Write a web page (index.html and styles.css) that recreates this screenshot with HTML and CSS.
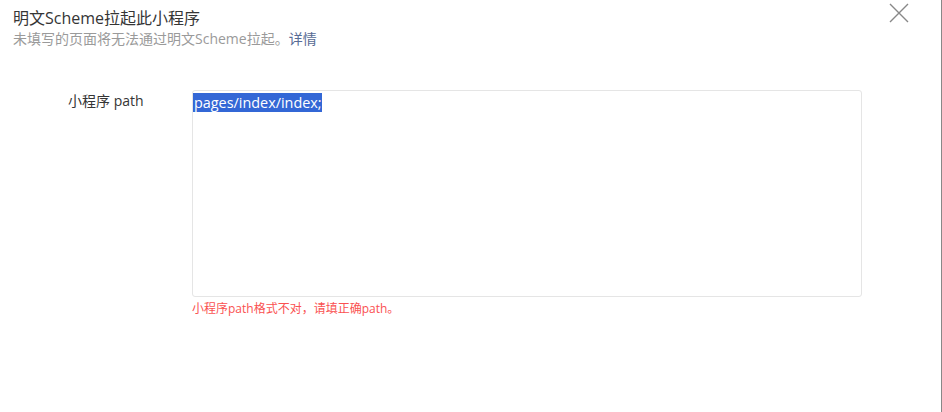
FILE: index.html
```html
<!DOCTYPE html>
<html>

<head>
    <meta charset="UTF-8" />
    <meta name="viewport" content="width=device-width, initial-scale=1.0" />
    <title>明文Scheme拉起此小程序</title>
    <link rel="stylesheet" href="styles.css">
</head>

<body>
    <div class="dialog">
        <div class="head">
            <div class="title">明文Scheme拉起此小程序</div>
            <div class="desc">未填写的页面将无法通过明文Scheme拉起。<a class="link" href="#">详情</a></div>
            <span class="close">
                <svg width="20" height="20" viewBox="0 0 20 20">
                    <path d="M1 1L19 19M19 1L1 19" stroke="#888" stroke-width="1.4" fill="none" />
                </svg>
            </span>
        </div>

        <div class="form">
            <div class="label">小程序 path</div>
            <div class="field">
                <div class="box"><span class="sel">pages/index/index;</span></div>
                <div class="error">小程序path格式不对，请填正确path。</div>
            </div>
        </div>
    </div>
</body>

</html>
```
FILE: styles.css
```css
body {
    margin: 0;
    background: #fff;
    font-family: "Open Sans", "Noto Sans CJK SC", sans-serif;
    color: #333;
}

.dialog {
    height: 412px;
    box-sizing: border-box;
    border-right: 1px solid #888;
}

.head {
    position: relative;
    padding: 7px 13px 0;
}

.title {
    font-size: 16px;
    line-height: 23px;
    color: #353535;
}

.desc {
    font-size: 14px;
    line-height: 18px;
    color: #9a9a9a;
}

.link {
    color: #576b95;
    text-decoration: none;
}

.close {
    position: absolute;
    top: 3px;
    right: 32px;
    width: 20px;
    height: 20px;
}

.form {
    display: flex;
    margin-top: 42px;
}

.label {
    flex-shrink: 0;
    width: 192px;
    padding-left: 68px;
    box-sizing: border-box;
    font-size: 14px;
    line-height: 20px;
    padding-top: 1px;
    color: #353535;
}

.field {
    width: 670px;
}

.box {
    height: 207px;
    box-sizing: border-box;
    border: 1px solid #e5e5e5;
    border-radius: 3px;
    padding: 1px 0 0 0;
    font-size: 14.4px;
    line-height: 21px;
}

.sel {
    background: #3367d6;
    color: #fff;
    padding: 0 0 0 1px;
}

.error {
    margin-top: 3px;
    font-size: 12px;
    line-height: 17px;
    color: #fa5151;
}
```
